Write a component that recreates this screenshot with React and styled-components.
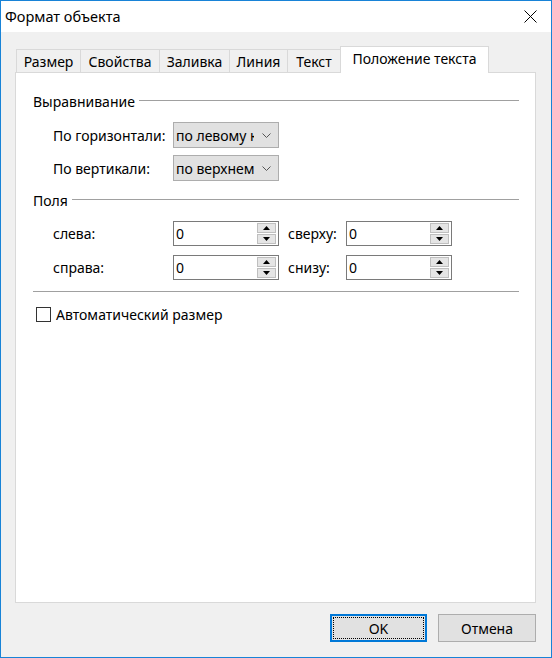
import React from "react";
import styled, { createGlobalStyle } from "styled-components";

const Global = createGlobalStyle`
  html, body { margin: 0; padding: 0; background: #ffffff; }
  body { font-family: "Noto Sans", "Open Sans", sans-serif; }
  * { box-sizing: border-box; }
`;

const FONT = `"Noto Sans", "Open Sans", sans-serif`;

const Window = styled.div`
  width: 552px;
  height: 658px;
  border: 1px solid #1883d7;
  display: flex;
  flex-direction: column;
  background: #f0f0f0;
  font-family: ${FONT};
  font-size: 14px;
  color: #000;
`;

const TitleBar = styled.div`
  height: 31px;
  background: #ffffff;
  display: flex;
  align-items: center;
  justify-content: space-between;
  padding: 0 14px 0 4px;
  flex-shrink: 0;
`;

const Title = styled.span`
  font-size: 14.5px;
  line-height: 20px;
  margin-top: -1px;
`;

const CloseIcon = styled.svg`
  width: 13px;
  height: 13px;
  display: block;
`;

const Body = styled.div`
  flex: 1;
  display: flex;
  flex-direction: column;
  padding: 14px 15px 0 14px;
`;

const TabStrip = styled.div`
  display: flex;
  align-items: flex-end;
  height: 27px;
  padding-left: 1px;
  position: relative;
  z-index: 1;
  margin-bottom: -1px;
`;

const Tab = styled.div`
  height: ${(p) => (p.$active ? 27 : 24)}px;
  width: ${(p) => p.$w}px;
  flex-shrink: 0;
  border: 1px solid #d9d9d9;
  border-bottom: ${(p) => (p.$active ? "none" : "1px solid #d9d9d9")};
  border-left: ${(p) => (p.$first || p.$active ? "1px solid #d9d9d9" : "none")};
  margin-left: ${(p) => (p.$active ? -1 : 0)}px;
  background: ${(p) => (p.$active ? "#ffffff" : "#f0f0f0")};
  display: flex;
  align-items: center;
  justify-content: center;
  font-size: 14px;
  padding-bottom: ${(p) => (p.$active ? 3 : 0)}px;
  white-space: nowrap;
`;

const Panel = styled.div`
  width: 521px;
  height: 531px;
  background: #ffffff;
  border: 1px solid #d9d9d9;
  display: flex;
  flex-direction: column;
  padding: 0 16px 0 17px;
`;

const GroupHeader = styled.div`
  display: flex;
  align-items: center;
  height: 20px;
  margin-top: ${(p) => p.$mt}px;
  gap: 4px;
`;

const HeaderLine = styled.div`
  flex: 1;
  height: 1px;
  background: #a0a0a0;
  margin-top: -2px;
`;

const FieldRow = styled.div`
  display: flex;
  align-items: center;
  margin-top: ${(p) => p.$mt}px;
  padding-left: 20px;
`;

const Label = styled.span`
  width: ${(p) => p.$w}px;
  flex-shrink: 0;
  white-space: nowrap;
`;

const Combo = styled.div`
  width: 106px;
  height: 26px;
  background: #e1e1e1;
  border: 1px solid #adadad;
  display: flex;
  align-items: center;
  padding-left: 2px;
  padding-right: 7px;
`;

const ComboText = styled.span`
  flex: 1;
  overflow: hidden;
  white-space: nowrap;
  margin-right: 8px;
`;

const Chevron = styled.svg`
  width: 9px;
  height: 5px;
  display: block;
  flex-shrink: 0;
`;

const SpinBox = styled.div`
  width: 106px;
  height: 25px;
  border: 1px solid #7a7a7a;
  background: #fff;
  display: flex;
  align-items: stretch;
  padding: 1px 1px 1px 2px;
`;

const SpinValue = styled.span`
  flex: 1;
  display: flex;
  align-items: center;
`;

const SpinButtons = styled.div`
  width: 19px;
  display: flex;
  flex-direction: column;
  gap: 1px;
  margin-right: 1px;
`;

const SpinBtn = styled.div`
  flex: 1;
  background: #e5e5e5;
  border: 1px solid #bfbfbf;
  display: flex;
  align-items: center;
  justify-content: center;
`;

const Arrow = styled.svg`
  width: 7px;
  height: 4px;
  display: block;
`;

const MidLabel = styled.span`
  width: 67px;
  padding-left: 9px;
  white-space: nowrap;
`;

const Separator = styled.div`
  height: 1px;
  background: #a0a0a0;
  margin-top: ${(p) => p.$mt}px;
`;

const CheckRow = styled.label`
  display: flex;
  align-items: center;
  margin-top: 13px;
  padding-left: 3px;
  gap: 5px;
`;

const CheckBox = styled.span`
  width: 15px;
  height: 15px;
  border: 1px solid #333333;
  background: #fff;
  display: block;
`;

const ButtonRow = styled.div`
  display: flex;
  justify-content: flex-end;
  gap: 11px;
  margin-top: 11px;
`;

const Button = styled.div`
  width: ${(p) => (p.$primary ? 97 : 98)}px;
  height: 28px;
  background: #e1e1e1;
  border: ${(p) => (p.$primary ? "2px solid #0078d7" : "1px solid #adadad")};
  display: flex;
  align-items: center;
  justify-content: center;
  position: relative;
  font-size: 14px;
  ${(p) =>
    p.$primary &&
    `&::after {
      content: "";
      position: absolute;
      inset: 1px;
      border: 1px dotted #000;
    }`}
`;

function Spin({ value }) {
  return (
    <SpinBox>
      <SpinValue>{value}</SpinValue>
      <SpinButtons>
        <SpinBtn>
          <Arrow viewBox="0 0 7 4">
            <path d="M3.5 0 L7 4 L0 4 Z" fill="#000" />
          </Arrow>
        </SpinBtn>
        <SpinBtn>
          <Arrow viewBox="0 0 7 4">
            <path d="M0 0 L7 0 L3.5 4 Z" fill="#000" />
          </Arrow>
        </SpinBtn>
      </SpinButtons>
    </SpinBox>
  );
}

function ComboBox({ text }) {
  return (
    <Combo>
      <ComboText>{text}</ComboText>
      <Chevron viewBox="0 0 9 5">
        <path d="M0.5 0.5 L4.5 4.5 L8.5 0.5" stroke="#555" strokeWidth="1" fill="none" />
      </Chevron>
    </Combo>
  );
}

const tabs = [
  { t: "Размер", w: 65 },
  { t: "Свойства", w: 79 },
  { t: "Заливка", w: 70 },
  { t: "Линия", w: 58 },
  { t: "Текст", w: 53 },
];

export default function App() {
  return (
    <>
      <Global />
      <Window>
        <TitleBar>
          <Title>Формат объекта</Title>
          <CloseIcon viewBox="0 0 13 13">
            <path d="M0.5 0.5 L12.5 12.5 M12.5 0.5 L0.5 12.5" stroke="#000" strokeWidth="1" />
          </CloseIcon>
        </TitleBar>
        <Body>
          <TabStrip>
            {tabs.map((tab, i) => (
              <Tab key={tab.t} $w={tab.w} $first={i === 0}>
                {tab.t}
              </Tab>
            ))}
            <Tab $active $w={149}>
              Положение текста
            </Tab>
          </TabStrip>
          <Panel>
            <GroupHeader $mt={18}>
              <span>Выравнивание</span>
              <HeaderLine />
            </GroupHeader>
            <FieldRow $mt={11}>
              <Label $w={120}>По горизонтали:</Label>
              <ComboBox text="по левому краю" />
            </FieldRow>
            <FieldRow $mt={7}>
              <Label $w={120}>По вертикали:</Label>
              <ComboBox text="по верхнему краю" />
            </FieldRow>
            <GroupHeader $mt={9}>
              <span>Поля</span>
              <HeaderLine />
            </GroupHeader>
            <FieldRow $mt={11}>
              <Label $w={120}>слева:</Label>
              <Spin value="0" />
              <MidLabel>сверху:</MidLabel>
              <Spin value="0" />
            </FieldRow>
            <FieldRow $mt={9}>
              <Label $w={120}>справа:</Label>
              <Spin value="0" />
              <MidLabel>снизу:</MidLabel>
              <Spin value="0" />
            </FieldRow>
            <Separator $mt={11} />
            <CheckRow>
              <CheckBox />
              <span>Автоматический размер</span>
            </CheckRow>
          </Panel>
          <ButtonRow>
            <Button $primary>OK</Button>
            <Button>Отмена</Button>
          </ButtonRow>
        </Body>
      </Window>
    </>
  );
}
